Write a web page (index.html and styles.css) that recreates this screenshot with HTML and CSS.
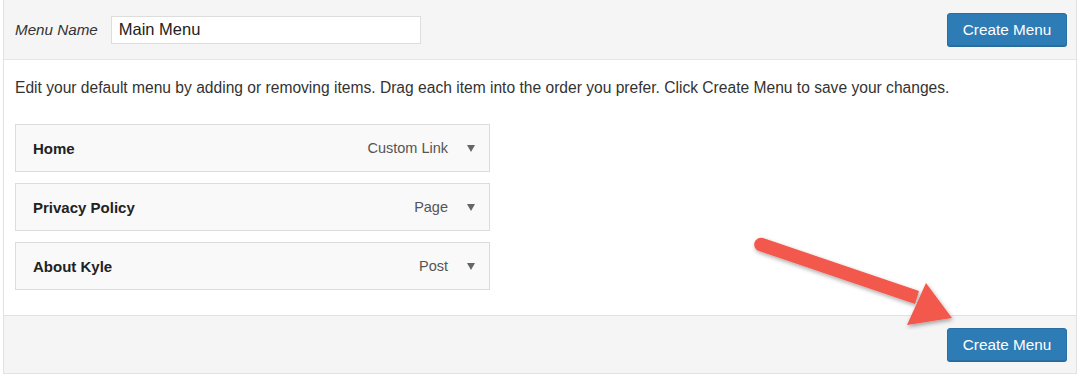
FILE: index.html
```html
<!DOCTYPE html>
<html lang="en">
<head>
  <meta charset="UTF-8">
  <title>Menu Editor</title>
  <link rel="stylesheet" href="styles.css">
</head>
<body>
  <div class="menu-edit">
    <div class="menu-header">
      <label class="menu-name-label" for="menu-name">Menu Name</label>
      <input type="text" id="menu-name" class="menu-name" value="Main Menu">
      <button class="button-primary">Create Menu</button>
    </div>

    <div class="menu-body">
      <p class="menu-help">Edit your default menu by adding or removing items. Drag each item into the order you prefer. Click Create Menu to save your changes.</p>

      <ul class="menu-items">
        <li class="menu-item">
          <span class="item-title">Home</span>
          <span class="item-type">Custom Link</span>
          <span class="item-arrow"></span>
        </li>
        <li class="menu-item">
          <span class="item-title">Privacy Policy</span>
          <span class="item-type">Page</span>
          <span class="item-arrow"></span>
        </li>
        <li class="menu-item">
          <span class="item-title">About Kyle</span>
          <span class="item-type">Post</span>
          <span class="item-arrow"></span>
        </li>
      </ul>
    </div>

    <div class="menu-footer">
      <button class="button-primary">Create Menu</button>
    </div>

    <svg class="callout-arrow" width="220" height="110" viewBox="740 220 220 110">
      <defs>
        <filter id="shadow" x="-20%" y="-20%" width="140%" height="140%">
          <feDropShadow dx="1" dy="2" stdDeviation="2" flood-color="#000" flood-opacity="0.35"/>
        </filter>
      </defs>
      <g filter="url(#shadow)" fill="#f2584b">
        <path d="M762 238 L918 291 L914 304 L758 251 A6.8 6.8 0 0 1 762 238 Z"/>
        <polygon points="925,283 951,318 906,325"/>
      </g>
    </svg>
  </div>
</body>
</html>
```

FILE: styles.css
```css
body {
  margin: 0;
  font-family: "Liberation Sans", Arial, sans-serif;
  color: #333;
  background: #fff;
}
.menu-edit {
  position: relative;
  margin: 0 3px;
  border: 1px solid #e2e2e2;
  border-top: none;
  height: 374px;
  box-sizing: border-box;
  display: flex;
  flex-direction: column;
}
.menu-header {
  display: flex;
  align-items: center;
  height: 60px;
  padding: 0 9px 0 11px;
  background: #f5f5f5;
  border-bottom: 1px solid #e5e5e5;
  box-sizing: border-box;
}
.menu-name-label {
  font-style: italic;
  font-size: 15.2px;
  color: #333;
  margin-right: 13px;
}
.menu-name {
  width: 310px;
  height: 28px;
  box-sizing: border-box;
  border: 1px solid #ddd;
  background: #fff;
  padding: 0 7px;
  font-family: inherit;
  font-size: 16.5px;
  color: #222;
}
.button-primary {
  margin-left: auto;
  width: 120px;
  height: 33px;
  background: #2e7cb6;
  border: 1px solid #2a6fa3;
  border-radius: 3px;
  color: #fff;
  font-family: inherit;
  font-size: 15.3px;
  box-shadow: 0 1px 0 #2a6a99;
}
.menu-body {
  flex: 1;
  padding: 0 11px;
  background: #fff;
}
.menu-help {
  margin: 19px 0 27px;
  font-size: 15.6px;
  color: #333;
}
.menu-items {
  list-style: none;
  margin: 0;
  padding: 0;
  display: flex;
  flex-direction: column;
  gap: 11px;
}
.menu-item {
  display: flex;
  align-items: center;
  width: 475px;
  height: 48px;
  box-sizing: border-box;
  padding: 0 14px 0 17px;
  background: #f9f9f9;
  border: 1px solid #dcdcdc;
}
.item-title {
  font-weight: bold;
  font-size: 15px;
  color: #222;
}
.item-type {
  margin-left: auto;
  font-size: 14.5px;
  color: #555;
}
.item-arrow {
  margin-left: 19px;
  width: 0;
  height: 0;
  border-left: 4px solid transparent;
  border-right: 4px solid transparent;
  border-top: 7px solid #666;
}
.menu-footer {
  display: flex;
  align-items: center;
  height: 58px;
  padding: 0 9px 0 11px;
  background: #f5f5f5;
  border-top: 1px solid #e2e2e2;
  box-sizing: border-box;
}
.callout-arrow {
  position: absolute;
  left: 737px;
  top: 220px;
}
```
